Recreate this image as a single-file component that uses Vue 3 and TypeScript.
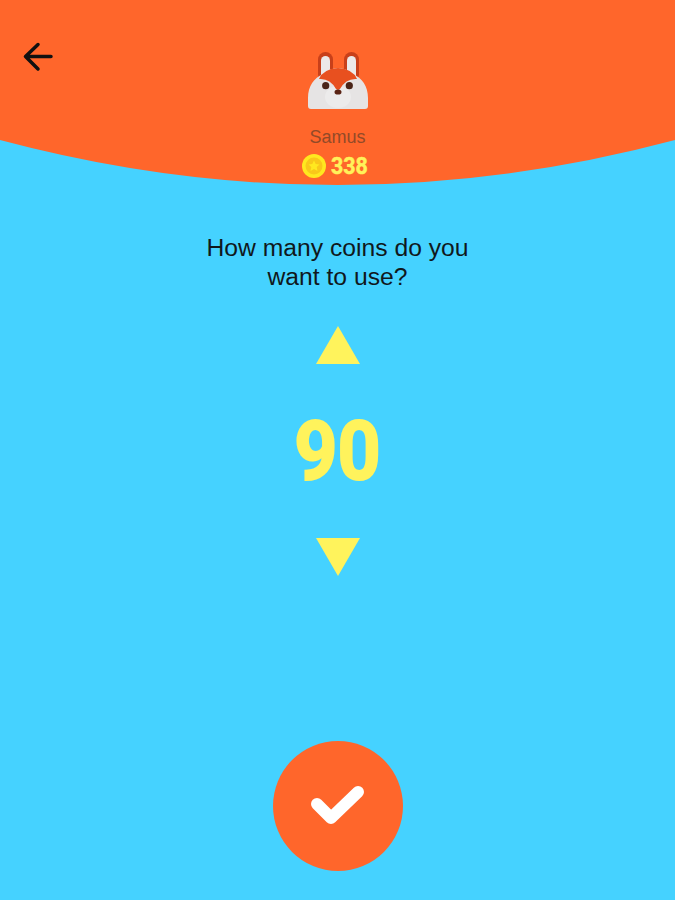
<template>
  <div class="screen">
    <header class="top">
      <svg class="top-bg" width="675" height="186" viewBox="0 0 675 186">
        <path d="M0 0H675V140Q337.5 230 0 140Z" fill="#ff662b" />
      </svg>
      <button class="back" aria-label="Back">
        <svg width="32" height="32" viewBox="0 0 32 32" fill="none" stroke="#111" stroke-width="3.5" stroke-linecap="round" stroke-linejoin="round">
          <path d="M3.500 15.500H29M16 3.500L3.500 15.500L16 28" />
        </svg>
      </button>
      <svg class="avatar" width="60" height="58" viewBox="0 0 60 58">
        <rect x="10" y="0" width="15" height="30" rx="7.5" fill="#c8401a" />
        <rect x="36" y="0" width="15" height="30" rx="7.5" fill="#c8401a" />
        <rect x="13" y="4" width="9" height="26" rx="4.500" fill="#ece9e8" />
        <rect x="39" y="4" width="9" height="26" rx="4.500" fill="#ece9e8" />
        <path d="M0 54V46C0 34 6 26 15 22C20 18 25 16 30 16C35 16 40 18 45 22C54 26 60 34 60 46V54Q60 57 57 57H3Q0 57 0 54Z" fill="#e6e4e4" />
        <ellipse cx="30" cy="45" rx="13" ry="11" fill="#ecebeb" />
        <path d="M11 27Q15 17 30 16Q45 17 49 27Q38 26 32 37L30 38L28 37Q22 26 11 27Z" fill="#e8501f" />
        <circle cx="17.700" cy="33.700" r="3.600" fill="#4a2418" />
        <circle cx="41.300" cy="33.700" r="3.600" fill="#4a2418" />
        <ellipse cx="30" cy="40" rx="3.500" ry="2.600" fill="#5a2415" />
      </svg>
      <div class="name">Samus</div>
      <div class="coins">
        <svg width="24" height="24" viewBox="0 0 24 24">
          <circle cx="12" cy="12" r="12" fill="#ffe81f" />
          <circle cx="12" cy="12" r="8.500" fill="#f9c81a" />
          <path d="M12 6.500L13.700 10.100L17.500 10.500L14.700 13.100L15.500 17L12 15L8.500 17L9.300 13.100L6.500 10.500L10.300 10.100Z" fill="#ffe81f" />
        </svg>
        <span class="coin-count">338</span>
      </div>
    </header>

    <p class="question">How many coins do you<br />want to use?</p>

    <div class="picker">
      <button class="tri up" aria-label="More"></button>
      <div class="amount"><span>90</span></div>
      <button class="tri down" aria-label="Less"></button>
    </div>

    <button class="confirm" aria-label="Confirm">
      <svg width="54" height="42" viewBox="0 0 54 42" fill="none" stroke="#fff" stroke-width="12" stroke-linecap="round" stroke-linejoin="round">
        <path d="M6 19L20 33L47 7" />
      </svg>
    </button>
  </div>
</template>

<script setup lang="ts">
</script>

<style>
html,
body {
  margin: 0;
  overflow: hidden;
}
</style>

<style scoped>
.screen {
  width: 675px;
  height: 900px;
  background: #45d2ff;
  display: flex;
  flex-direction: column;
  align-items: center;
  font-family: "Liberation Sans", Arial, sans-serif;
}

button {
  border: 0;
  padding: 0;
  background: none;
  cursor: pointer;
}

.top {
  position: relative;
  width: 100%;
  height: 186px;
  padding-top: 52px;
  box-sizing: border-box;
  display: flex;
  flex-direction: column;
  align-items: center;
}

.top-bg {
  position: absolute;
  top: 0;
  left: 0;
}

.back {
  position: absolute;
  top: 41px;
  left: 22px;
  width: 32px;
  height: 32px;
}

.avatar,
.name,
.coins {
  position: relative;
}

.name {
  margin-top: 17px;
  font-size: 18px;
  line-height: 20px;
  color: #924a28;
}

.coins {
  margin-top: 5px;
  display: flex;
  align-items: center;
  gap: 5px;
  margin-left: -4px;
}

.coin-count {
  font-family: Roboto, sans-serif;
  font-weight: 700;
  font-size: 23px;
  line-height: 26px;
  color: #fff25a;
  -webkit-text-stroke: 0.5px #fff25a;
  display: inline-block;
  width: 39px;
  margin-top: 2px;
  transform: scaleX(0.93);
  transform-origin: left center;
}

.question {
  margin: 48px 0 0;
  font-size: 24.7px;
  line-height: 28.5px;
  text-align: center;
  color: #10181c;
}

.picker {
  width: 200px;
  margin-top: 35px;
  display: flex;
  flex-direction: column;
  align-items: center;
}

.tri {
  width: 0;
  height: 0;
  border-left: 22px solid transparent;
  border-right: 22px solid transparent;
}

.tri.up {
  border-bottom: 38px solid #fff35c;
}

.tri.down {
  border-top: 38px solid #fff35c;
}

.amount {
  height: 174px;
  display: flex;
  align-items: center;
  justify-content: center;
  font-family: Roboto, sans-serif;
  font-weight: 700;
  font-size: 81px;
  color: #fff35c;
  -webkit-text-stroke: 2px #fff35c;
}

.amount span {
  display: block;
  transform: scaleX(0.93);
}

.confirm {
  margin-top: 165px;
  width: 130px;
  height: 130px;
  border-radius: 50%;
  background: #ff662b;
  display: flex;
  align-items: center;
  justify-content: center;
}
</style>
